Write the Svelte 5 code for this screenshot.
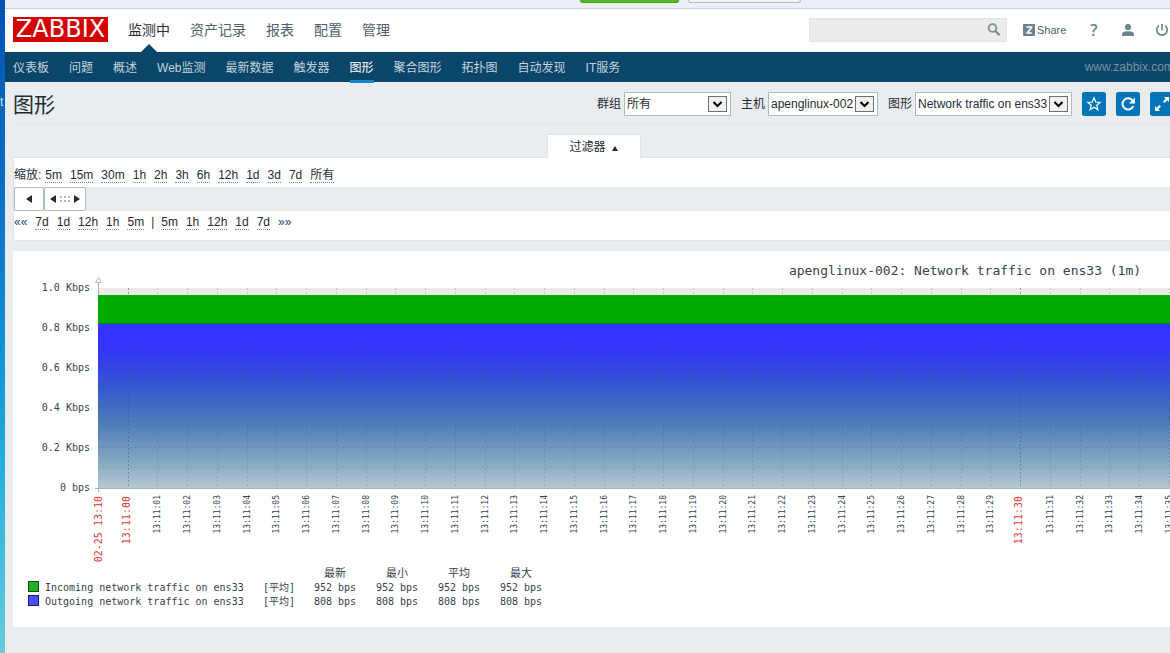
<script>
  const mainMenu = ['监测中', '资产记录', '报表', '配置', '管理'];
  const subMenu = [
    '仪表板',
    '问题',
    '概述',
    'Web监测',
    '最新数据',
    '触发器',
    '图形',
    '聚合图形',
    '拓扑图',
    '自动发现',
    'IT服务',
  ];
  const zoomLinks = ['5m', '15m', '30m', '1h', '2h', '3h', '6h', '12h', '1d', '3d', '7d', '所有'];
  const backLinks = ['7d', '1d', '12h', '1h', '5m'];
  const forwardLinks = ['5m', '1h', '12h', '1d', '7d'];

  let activeMain = '监测中';
  let activeSub = '图形';
  let filterOpen = true;
  let search = '';
  let group = '所有';
  let host = 'apenglinux-002';
  let graph = 'Network traffic on ens33';

  // plot area inside the graph svg
  const LEFT = 85;
  const TOP = 37;
  const BOTTOM = 237;
  const SECOND = 29.75;

  const yLabels = ['1.0 Kbps', '0.8 Kbps', '0.6 Kbps', '0.4 Kbps', '0.2 Kbps', '0 bps'];
  const gridRows = [1, 2, 3, 4, 5, 6, 7, 8, 9].map((i) => TOP - 1 + i * 20);

  const ticks = [];
  for (let s = 0; s <= 35; s++) {
    ticks.push({
      x: Math.floor(115 + s * SECOND) + 0.5,
      label: `13:11:${String(s).padStart(2, '0')}`,
      major: s % 30 == 0,
    });
  }

  const items = [
    { name: 'Incoming network traffic on ens33', kind: 'incoming', values: ['952 bps', '952 bps', '952 bps', '952 bps'] },
    { name: 'Outgoing network traffic on ens33', kind: 'outgoing', values: ['808 bps', '808 bps', '808 bps', '808 bps'] },
  ];
</script>

<div class="screen">
  <div class="desktop"><span>t</span></div>
  <div class="page">
    <div class="browser-strip">
      <button class="strip-button green" aria-label="confirm"></button>
      <button class="strip-button" aria-label="cancel"></button>
    </div>

    <header class="top">
      <a class="logo" href="#home">ZABBIX</a>
      <nav class="main-menu">
        {#each mainMenu as item}
          <a href="#{item}" class:active={item == activeMain} on:click={() => (activeMain = item)}>{item}</a>
        {/each}
      </nav>
      <form class="search">
        <input type="text" aria-label="search" bind:value={search} />
        <button type="button" aria-label="search">
          <svg width="14" height="14" viewBox="0 0 14 14">
            <circle cx="5.5" cy="5" r="3.9" fill="none" stroke="#768d99" stroke-width="1.7" />
            <path d="M8.3 8 L12.6 12.2" stroke="#768d99" stroke-width="2.2" />
          </svg>
        </button>
      </form>
      <a class="share" href="#share">
        <svg width="12" height="12" viewBox="0 0 12 12">
          <rect width="12" height="12" rx="1" fill="#6c828e" />
          <path d="M3.4 3 H8.6 V3.8 L4.2 8.6 V9 H8.8" fill="none" stroke="#fff" stroke-width="1.6" />
        </svg>
        Share
      </a>
      <div class="user-icons">
        <a class="help" href="#help">?</a>
        <a href="#profile" aria-label="profile">
          <svg width="14" height="14" viewBox="0 0 14 14" fill="#6c828e">
            <circle cx="7" cy="4" r="3.1" />
            <path d="M1 13 V11.5 C1 9 4 8.3 7 8.3 S13 9 13 11.5 V13 Z" />
          </svg>
        </a>
        <a href="#logout" aria-label="logout">
          <svg width="14" height="14" viewBox="0 0 14 14" fill="none" stroke="#6c828e" stroke-width="1.6">
            <path d="M7 1 V7.5" />
            <path d="M3.8 2.6 A5.3 5.3 0 1 0 10.2 2.6" />
          </svg>
        </a>
      </div>
    </header>

    <nav class="sub-menu">
      {#each subMenu as item}
        <a href="#{item}" class:active={item == activeSub} on:click={() => (activeSub = item)}>{item}</a>
      {/each}
      <a class="site" href="#site">www.zabbix.com</a>
    </nav>

    <main>
      <div class="title-row">
        <h1>图形</h1>
        <label for="group">群组</label>
        <select id="group" class="group" bind:value={group}>
          <option>所有</option>
        </select>
        <label for="host">主机</label>
        <select id="host" class="host" bind:value={host}>
          <option>apenglinux-002</option>
        </select>
        <label for="graph">图形</label>
        <select id="graph" class="graph-name" bind:value={graph}>
          <option>Network traffic on ens33</option>
        </select>
        <button class="icon-button" aria-label="favourite">
          <svg width="16" height="16" viewBox="0 0 16 16">
            <path
              d="M8 1.8 L9.7 6 L14.2 6.3 L10.8 9.2 L11.9 13.6 L8 11.2 L4.1 13.6 L5.2 9.2 L1.8 6.3 L6.3 6 Z"
              fill="none"
              stroke="#fff"
              stroke-width="1.2"
            />
          </svg>
        </button>
        <button class="icon-button" aria-label="refresh">
          <svg width="16" height="16" viewBox="0 0 16 16">
            <path d="M12.6 4.6 A5.6 5.6 0 1 0 13.3 10" fill="none" stroke="#fff" stroke-width="2" />
            <path d="M15 1.5 V7.5 H9 Z" fill="#fff" />
          </svg>
        </button>
        <button class="icon-button" aria-label="fullscreen">
          <svg width="16" height="16" viewBox="0 0 16 16" fill="#fff">
            <path d="M10 1 H15 V6 L13.3 4.3 L10.6 7 L9 5.4 L11.7 2.7 Z" />
            <path d="M6 15 H1 V10 L2.7 11.7 L5.4 9 L7 10.6 L4.3 13.3 Z" />
          </svg>
        </button>
      </div>

      <div class="filter-tab">
        <button on:click={() => (filterOpen = !filterOpen)}>过滤器 <span class="arrow-up"></span></button>
      </div>

      {#if filterOpen}
        <section class="filter">
          <div class="links zoom">
            <span class="caption">缩放:</span>
            {#each zoomLinks as link}
              <a href="#{link}">{link}</a>
            {/each}
          </div>
          <div class="scroll-bar">
            <button aria-label="back">
              <svg width="6" height="8" viewBox="0 0 6 8"><path d="M6 0 V8 L0 4 Z" /></svg>
            </button>
            <button class="handle" aria-label="period">
              <svg width="30" height="8" viewBox="0 0 30 8">
                <path d="M6 0 V8 L0 4 Z M24 0 V8 L30 4 Z" />
                <path d="M10 1 h2 v2 h-2z M14 1 h2 v2 h-2z M18 1 h2 v2 h-2z M10 5 h2 v2 h-2z M14 5 h2 v2 h-2z M18 5 h2 v2 h-2z" fill="#acbbc2" />
              </svg>
            </button>
          </div>
          <div class="links move">
            <span class="chevrons">««</span>
            {#each backLinks as link}
              <a href="#back-{link}">{link}</a>
            {/each}
            <span class="divider">|</span>
            {#each forwardLinks as link}
              <a href="#forward-{link}">{link}</a>
            {/each}
            <span class="chevrons">»»</span>
          </div>
        </section>
      {/if}

      <section class="card">
        <svg class="plot" width="100%" height="316">
          <defs>
            <linearGradient id="outgoing" x1="0" y1="0" x2="0" y2="1">
              <stop offset="0" stop-color="#3333ff" />
              <stop offset="0.14" stop-color="#3333fa" />
              <stop offset="0.36" stop-color="#3454d2" />
              <stop offset="0.6" stop-color="#4f7bba" />
              <stop offset="0.8" stop-color="#7ba0bf" />
              <stop offset="1" stop-color="#b4c8d0" />
            </linearGradient>
          </defs>

          <text class="graph-title" x="952" y="24" text-anchor="middle">apenglinux-002: Network traffic on ens33 (1m)</text>

          <rect x={LEFT} y={TOP} width="100%" height="7" fill="#ebebeb" />
          <path d="M85.5 32 V241 M82 237.5 H85" stroke="#9fb2bb" fill="none" />
          <rect x={LEFT} y="44" width="100%" height="29" fill="#00aa00" />
          <rect x={LEFT} y="73" width="100%" height="164" fill="url(#outgoing)" />
          <rect x={LEFT} y="72" width="100%" height="1" fill="#008a20" />

          {#each gridRows as y}
            {#if y > 90}
              <line class="grid inner" x1={LEFT} x2="100%" y1={y + 0.5} y2={y + 0.5} />
            {/if}
          {/each}
          {#each ticks as tick}
            <line class="grid" class:major={tick.major} x1={tick.x} x2={tick.x} y1={TOP} y2="44" />
            <line class="grid inner" class:major={tick.major} x1={tick.x} x2={tick.x} y1="93" y2={BOTTOM} />
          {/each}

          <line x1={LEFT} x2="100%" y1="237.5" y2="237.5" stroke="#a5b5bd" />
          <path d="M82.5 31.5 L85.5 26.5 L88.5 31.5 Z" fill="#fff" stroke="#acbbc2" />

          {#each yLabels as label, i}
            <text class="mono" x="77" y={40 + i * 40} text-anchor="end">{label}</text>
          {/each}

          <text class="mono red" transform="translate(89 245) rotate(-90)" text-anchor="end">02-25 13:10</text>
          {#each ticks as tick}
            <text
              class="mono"
              class:red={tick.major}
              class:small={!tick.major}
              transform="translate({Math.floor(tick.x) + (tick.major ? 2 : 3)} {tick.major ? 245 : 244}) rotate(-90)"
              text-anchor="end">{tick.label}</text
            >
          {/each}
        </svg>

        <table>
          <thead>
            <tr>
              <th class="swatch-col"></th>
              <th class="name-col"></th>
              <th class="func-col"></th>
              <th>最新</th>
              <th>最小</th>
              <th>平均</th>
              <th>最大</th>
            </tr>
          </thead>
          <tbody>
            {#each items as item}
              <tr>
                <td><span class="swatch {item.kind}"></span></td>
                <td class="name">{item.name}</td>
                <td class="func">[平均]</td>
                {#each item.values as value}
                  <td>{value}</td>
                {/each}
              </tr>
            {/each}
          </tbody>
        </table>
      </section>
    </main>
  </div>
</div>

<style>
  :global(body) {
    background: #ebeef0;
  }
  .screen {
    display: grid;
    grid-template-columns: 5px minmax(0, 1fr);
    min-height: 100vh;
    overflow: hidden;
    font-family: 'Liberation Sans', 'Noto Sans CJK SC', sans-serif;
    font-size: 12px;
    line-height: 18px;
    color: #1f2c33;
    background: #e9edf0;
  }
  .screen a {
    color: inherit;
    text-decoration: none;
  }
  .screen button {
    font: inherit;
    color: inherit;
    padding: 0;
    cursor: pointer;
  }

  .desktop {
    overflow: hidden;
    padding-top: 93px;
    color: #d8e0ea;
    background: linear-gradient(#0453b0, #0a6fc4 30%, #0d90d3 52%, #25b0dc 72%, #68cbdf);
  }

  .page {
    width: calc(100% + 9px);
  }

  .browser-strip {
    display: flex;
    align-items: flex-start;
    gap: 9px;
    box-sizing: border-box;
    height: 9px;
    padding-left: 575px;
    background: #ebeef7;
    border-bottom: 1px solid #c8d2e9;
  }
  .browser-strip .strip-button {
    width: 113px;
    height: 3px;
    border: 1px solid #b9b9bd;
    border-top: none;
    border-radius: 0 0 3px 3px;
    background: #f2f2f4;
  }
  .browser-strip .green {
    width: 99px;
    border-color: #3f9f1c;
    background: #55bd1c;
  }

  .top {
    display: flex;
    align-items: center;
    box-sizing: border-box;
    height: 43px;
    padding: 0 5px 2px 8px;
    background: #fff;
  }
  .screen .logo {
    width: 95px;
    height: 25px;
    text-align: center;
    font: 24px/25px 'DejaVu Sans', sans-serif;
    color: #fff;
    background: #d40000;
  }
  .main-menu {
    display: flex;
    align-self: stretch;
    gap: 20px;
    margin-left: 20px;
    font-size: 14px;
    line-height: 42px;
    color: #4f5f69;
  }
  .main-menu a {
    position: relative;
  }
  .main-menu .active {
    color: #1f2c33;
  }
  .main-menu .active::after {
    content: '';
    position: absolute;
    left: 50%;
    bottom: -2px;
    margin-left: -8px;
    border: 8px solid transparent;
    border-top: none;
    border-bottom-color: #0a466a;
  }
  .search {
    display: flex;
    box-sizing: border-box;
    width: 198px;
    height: 24px;
    margin-left: auto;
    border: 1px solid #e3e3e3;
    background: #ebebeb;
  }
  .search input {
    flex: 1;
    min-width: 0;
    border: none;
    background: none;
    font: inherit;
  }
  .search button {
    display: grid;
    place-items: center;
    width: 24px;
    border: none;
    background: none;
  }
  .screen .share {
    display: flex;
    align-items: center;
    gap: 2px;
    width: 43px;
    margin: 0 16px;
    font-size: 11px;
    color: #4f5f69;
  }
  .share svg {
    flex: none;
  }
  .user-icons {
    display: flex;
    gap: 10px;
    color: #6c828e;
  }
  .user-icons a {
    display: grid;
    place-items: center;
    width: 24px;
    height: 24px;
  }
  .user-icons .help {
    font-size: 16px;
    font-weight: 600;
    font-family: 'Open Sans', sans-serif;
  }

  .sub-menu {
    display: flex;
    gap: 20px;
    height: 30px;
    padding: 0 5px 0 8px;
    line-height: 32px;
    color: #c3d3dd;
    background: #0a466a;
  }
  .sub-menu a {
    white-space: nowrap;
  }
  .screen .sub-menu .active {
    color: #fff;
    border-bottom: 3px solid #1a83cc;
    height: 28px;
  }
  .screen .sub-menu .site {
    margin-left: auto;
    line-height: 30px;
    color: #7b929f;
  }

  main {
    padding: 0 5px 0 8px;
  }
  .title-row {
    display: flex;
    align-items: center;
    box-sizing: border-box;
    height: 42px;
    padding-top: 2px;
    border-bottom: 1px solid #dfe4e7;
  }
  h1 {
    margin: 0 auto 0 0;
    padding-top: 2px;
    font-size: 21px;
    line-height: 32px;
    font-weight: 400;
  }
  label {
    margin: 0 3px 0 10px;
  }
  select {
    appearance: none;
    box-sizing: border-box;
    height: 24px;
    padding: 0 24px 0 2px;
    border: 1px solid #acbbc2;
    border-radius: 0;
    font: inherit;
    color: inherit;
    background: #fff
      url("data:image/svg+xml,%3Csvg xmlns='http://www.w3.org/2000/svg' width='19' height='16'%3E%3Crect x='.5' y='.5' width='18' height='15' fill='%23f0f0f0' stroke='%23707070'/%3E%3Cpath d='M5.5 6l4 4 4-4' fill='none' stroke='%23000' stroke-width='2'/%3E%3C/svg%3E")
      no-repeat right 3px center;
  }
  .group {
    width: 107px;
  }
  .host {
    width: 110px;
  }
  .graph-name {
    width: 157px;
  }
  .icon-button {
    display: grid;
    place-items: center;
    width: 24px;
    height: 24px;
    margin-left: 10px;
    border: 1px solid #0275b8;
    border-radius: 2px;
    background: #0275b8;
  }
  .screen .icon-button {
    color: #fff;
  }

  .filter-tab {
    display: flex;
    justify-content: center;
    align-items: flex-end;
    height: 33px;
  }
  .filter-tab button {
    position: relative;
    display: flex;
    align-items: center;
    justify-content: center;
    gap: 6px;
    box-sizing: border-box;
    width: 94px;
    height: 24px;
    margin-bottom: -1px;
    border: 1px solid #dfe4e7;
    border-bottom: none;
    border-radius: 2px 2px 0 0;
    background: #fff;
  }
  .arrow-up {
    margin-top: 4px;
    border: 3px solid transparent;
    border-top: none;
    border-bottom: 5px solid #1f2c33;
  }

  .filter {
    border: 1px solid #dfe4e7;
    background: #fff;
  }
  .links {
    display: flex;
    gap: 8px;
  }
  .zoom {
    padding: 8px 0 3px;
  }
  .move {
    padding: 2px 0 9px;
  }
  .links a {
    height: 16px;
    border-bottom: 1px dotted #768d99;
  }
  .caption {
    margin-right: -4px;
  }
  .divider {
    margin: 0 -1px;
  }
  .chevrons {
    color: #1f3f66;
  }
  .scroll-bar {
    display: flex;
    height: 24px;
    background: #e9edf0;
  }
  .scroll-bar button {
    display: grid;
    place-items: center;
    width: 30px;
    border: 1px solid #acbbc2;
    border-radius: 2px;
    background: #fff;
    fill: #1f2c33;
  }
  .scroll-bar .handle {
    width: 42px;
  }

  .card {
    margin-top: 10px;
    padding-bottom: 18px;
    background: #fff;
  }
  .plot {
    display: block;
  }
  .plot text {
    font-family: 'DejaVu Sans Mono', monospace;
    fill: #36434b;
  }
  .plot .graph-title {
    font-size: 13px;
  }
  .plot .mono {
    font-size: 10px;
  }
  .plot .small {
    font-size: 8px;
  }
  .plot .red {
    fill: #e33734;
  }
  .grid {
    stroke: #c3ced4;
    stroke-dasharray: 2 2;
  }
  .grid.major {
    stroke: #8fa3ae;
  }
  .grid.inner {
    stroke: #1f5f80;
    opacity: 0.2;
  }
  .grid.inner.major {
    opacity: 0.45;
  }

  table {
    margin-left: 15px;
    border-collapse: collapse;
    table-layout: fixed;
    width: 524px;
    font: 10px/14px 'DejaVu Sans Mono', 'Noto Sans CJK SC', monospace;
    color: #36434b;
  }
  tr {
    height: 14px;
  }
  th,
  td {
    padding: 0;
    font-weight: 400;
    text-align: center;
    vertical-align: top;
    line-height: 14px;
    white-space: nowrap;
  }
  th {
    font-size: 11px;
  }
  .swatch-col {
    width: 17px;
  }
  .name-col {
    width: 218px;
  }
  .func-col {
    width: 41px;
  }
  .name,
  .func {
    text-align: left;
  }
  .swatch {
    display: block;
    box-sizing: border-box;
    width: 11px;
    height: 11px;
    border: 1px solid #0f4d10;
    background: #22b022;
  }
  .swatch.outgoing {
    border-color: #15156b;
    background: #4d4dff;
  }
</style>
